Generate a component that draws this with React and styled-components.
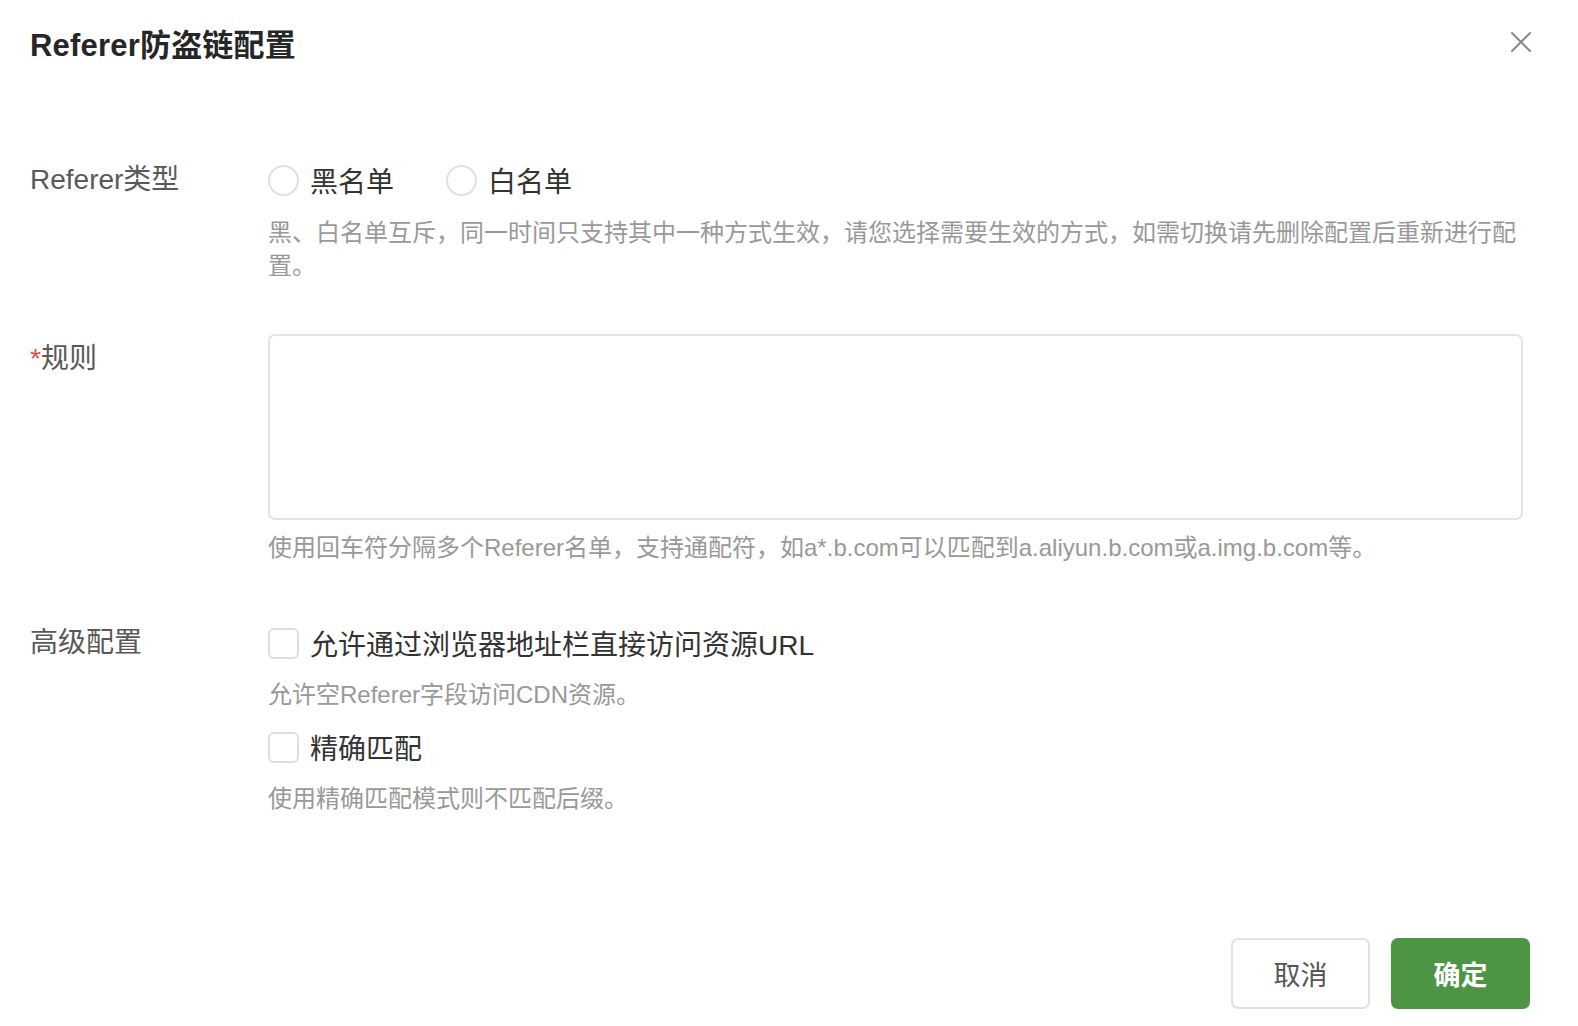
import React, { useState } from 'react';
import styled, { createGlobalStyle } from 'styled-components';

const GlobalStyle = createGlobalStyle`
  html, body {
    margin: 0;
    padding: 0;
    background: #fff;
  }
  body {
    font-family: "Liberation Sans", "Noto Sans CJK SC", sans-serif;
  }
  * {
    box-sizing: border-box;
  }
`;

const Dialog = styled.div`
  width: 1578px;
  height: 1026px;
  background: #fff;
  display: flex;
  flex-direction: column;
`;

const Header = styled.div`
  height: 84px;
  padding: 0 46px 0 30px;
  display: flex;
  align-items: center;
  justify-content: space-between;
`;

const Title = styled.h2`
  margin: 0;
  font-size: 31px;
  font-weight: 700;
  color: #262626;
  letter-spacing: 0.2px;
`;

const CloseButton = styled.button`
  border: 0;
  background: none;
  padding: 0;
  width: 22px;
  height: 22px;
  display: flex;
  align-items: center;
  justify-content: center;
  cursor: pointer;
`;

const Form = styled.form`
  padding: 76px 55px 0 30px;
  display: flex;
  flex-direction: column;
`;

const Row = styled.div`
  display: grid;
  grid-template-columns: 238px 1fr;
  margin-top: ${(p) => p.gap || 0}px;
`;

const Label = styled.div`
  font-size: 28px;
  line-height: 40px;
  color: #595959;
  padding-top: ${(p) => p.offset || 0}px;
`;

const Required = styled.span`
  color: #d9534f;
`;

const Field = styled.div`
  display: flex;
  flex-direction: column;
`;

const OptionLine = styled.div`
  display: flex;
  align-items: center;
  height: 40px;
  gap: 52px;
  margin-top: ${(p) => p.gap || 0}px;
`;

const Option = styled.label`
  display: flex;
  align-items: center;
  gap: 11px;
  font-size: 28px;
  color: #333;
  cursor: pointer;
`;

const RadioDot = styled.span`
  width: 31px;
  height: 31px;
  border-radius: 50%;
  border: 2px solid ${(p) => (p.checked ? '#4d9544' : '#dde1e8')};
  display: flex;
  align-items: center;
  justify-content: center;

  &::after {
    content: '';
    width: 13px;
    height: 13px;
    border-radius: 50%;
    background: ${(p) => (p.checked ? '#4d9544' : 'transparent')};
  }
`;

const CheckBox = styled.span`
  width: 31px;
  height: 31px;
  border-radius: 6px;
  border: 2px solid ${(p) => (p.checked ? '#4d9544' : '#dadee5')};
  background: ${(p) => (p.checked ? '#4d9544' : '#fff')};
  display: flex;
  align-items: center;
  justify-content: center;
`;

const Help = styled.div`
  font-size: 24px;
  line-height: 33px;
  color: #999;
  margin-top: ${(p) => p.gap || 0}px;
`;

const TextArea = styled.textarea`
  width: 100%;
  height: 186px;
  border: 2px solid #e4e4e4;
  border-radius: 7px;
  resize: none;
  outline: none;
  padding: 10px 14px;
  font-family: inherit;
  font-size: 24px;
  color: #333;
`;

const Footer = styled.div`
  margin-top: 123px;
  padding-right: 48px;
  display: flex;
  justify-content: flex-end;
  gap: 21px;
`;

const Button = styled.button`
  width: 139px;
  height: 71px;
  border-radius: 7px;
  font-family: inherit;
  font-size: 27px;
  cursor: pointer;
  border: 2px solid ${(p) => (p.primary ? '#4d9544' : '#dde1e8')};
  background: ${(p) => (p.primary ? '#4d9544' : '#fff')};
  color: ${(p) => (p.primary ? '#fff' : '#555')};
  font-weight: ${(p) => (p.primary ? 600 : 400)};
`;

const CloseIcon = () => (
  <svg width="22" height="22" viewBox="0 0 22 22">
    <path d="M2 2 L20 20 M20 2 L2 20" stroke="#8a8a8a" strokeWidth="2" strokeLinecap="round" fill="none" />
  </svg>
);

const CheckMark = () => (
  <svg width="18" height="18" viewBox="0 0 18 18">
    <path d="M3 9.5 L7.5 13.5 L15 5" stroke="#fff" strokeWidth="2.4" fill="none" />
  </svg>
);

const App = () => {
  const [type, setType] = useState('');
  const [rules, setRules] = useState('');
  const [allowEmpty, setAllowEmpty] = useState(false);
  const [exact, setExact] = useState(false);

  const handleSubmit = (e) => {
    e.preventDefault();
  };

  return (
    <>
      <GlobalStyle />
      <Dialog>
        <Header>
          <Title>Referer防盗链配置</Title>
          <CloseButton type="button" aria-label="关闭">
            <CloseIcon />
          </CloseButton>
        </Header>

        <Form onSubmit={handleSubmit}>
          <Row>
            <Label>Referer类型</Label>
            <Field>
              <OptionLine>
                <Option onClick={() => setType('black')}>
                  <RadioDot checked={type === 'black'} />
                  黑名单
                </Option>
                <Option onClick={() => setType('white')}>
                  <RadioDot checked={type === 'white'} />
                  白名单
                </Option>
              </OptionLine>
              <Help gap={16}>
                黑、白名单互斥，同一时间只支持其中一种方式生效，请您选择需要生效的方式，如需切换请先删除配置后重新进行配置。
              </Help>
            </Field>
          </Row>

          <Row gap={52}>
            <Label offset={5}>
              <Required>*</Required>规则
            </Label>
            <Field>
              <TextArea value={rules} onChange={(e) => setRules(e.target.value)} />
              <Help gap={11}>
                使用回车符分隔多个Referer名单，支持通配符，如a*.b.com可以匹配到a.aliyun.b.com或a.img.b.com等。
              </Help>
            </Field>
          </Row>

          <Row gap={59}>
            <Label>高级配置</Label>
            <Field>
              <OptionLine>
                <Option onClick={() => setAllowEmpty(!allowEmpty)}>
                  <CheckBox checked={allowEmpty}>{allowEmpty && <CheckMark />}</CheckBox>
                  允许通过浏览器地址栏直接访问资源URL
                </Option>
              </OptionLine>
              <Help gap={15}>允许空Referer字段访问CDN资源。</Help>
              <OptionLine gap={16}>
                <Option onClick={() => setExact(!exact)}>
                  <CheckBox checked={exact}>{exact && <CheckMark />}</CheckBox>
                  精确匹配
                </Option>
              </OptionLine>
              <Help gap={15}>使用精确匹配模式则不匹配后缀。</Help>
            </Field>
          </Row>
        </Form>

        <Footer>
          <Button type="button">取消</Button>
          <Button type="button" primary>
            确定
          </Button>
        </Footer>
      </Dialog>
    </>
  );
};

export default App;
